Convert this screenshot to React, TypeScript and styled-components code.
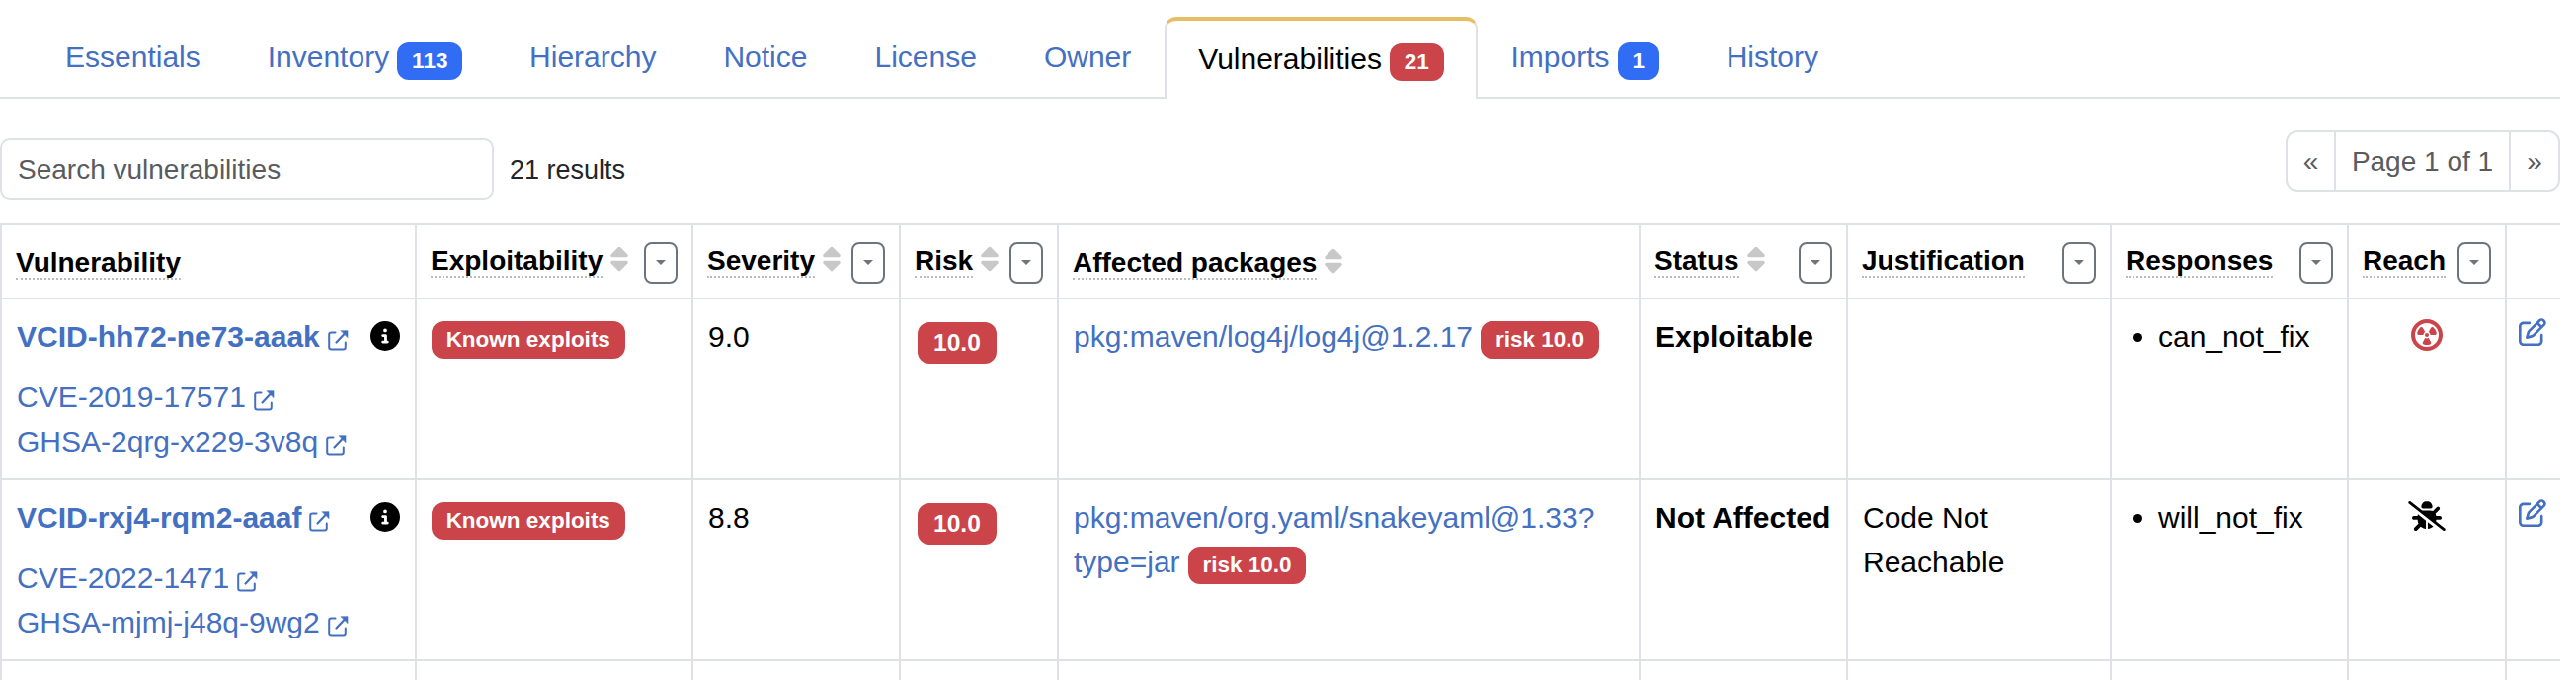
import React from 'react';
import styled, { createGlobalStyle } from 'styled-components';
import { FaBugSlash, FaCircleInfo, FaCircleRadiation, FaRegPenToSquare, FaSort } from 'react-icons/fa6';

const color = {
  line: '#dee2e6',
  link: '#4470c2',
  blue: '#316df4',
  red: '#cb444a',
  gold: '#e6be64',
  muted: '#595c5f',
  outline: '#6c757d',
};

const Global = createGlobalStyle`
  *, *::before, *::after { box-sizing: border-box; }
  body {
    margin: 0;
    background: #fff;
    color: #000;
    font-family: "Liberation Sans", Arial, sans-serif;
    font-size: 30px;
    line-height: 45px;
  }
`;

const Page = styled.main`
  width: 2592px;
  height: 688px;
  overflow: hidden;
`;

const TabBar = styled.nav`
  display: flex;
  height: 100px;
  padding: 17px 0 0 32px;
  border-bottom: 2px solid ${color.line};
`;

const Tab = styled.a<{ $active?: boolean }>`
  height: ${p => (p.$active ? 83 : 81)}px;
  padding: ${p => (p.$active ? 16 : 18)}px 32px 0;
  border: 2px solid ${p => (p.$active ? color.line : 'transparent')};
  border-top: ${p => (p.$active ? `4px solid ${color.gold}` : '0 solid transparent')};
  border-bottom: 0;
  border-radius: 12px 12px 0 0;
  background: ${p => (p.$active ? '#fff' : 'transparent')};
  color: ${p => (p.$active ? '#000' : color.link)};
  white-space: nowrap;
  text-decoration: none;
`;

const Badge = styled.span<{ $tone: 'blue' | 'red'; $large?: boolean }>`
  display: inline-block;
  padding: 0.35em 0.65em;
  border-radius: 12px;
  background: ${p => color[p.$tone]};
  color: #fff;
  font-size: ${p => (p.$large ? 24.6 : 22.5)}px;
  font-weight: 700;
  line-height: 1;
  white-space: nowrap;
  vertical-align: ${p => (p.$tone === 'blue' ? '-1px' : 'baseline')};
`;

const Toolbar = styled.div`
  display: flex;
  align-items: flex-start;
  justify-content: space-between;
  height: 126px;
  padding-top: 32px;
  font-size: 28px;
  line-height: 42px;
`;

const SearchGroup = styled.div`
  display: flex;
  align-items: center;
  gap: 16px;
  padding-top: 8px;
  color: #212529;
`;

const SearchInput = styled.input`
  width: 500px;
  height: 62px;
  padding: 2px 16px 0;
  border: 2px solid ${color.line};
  border-radius: 10px;
  background: #fff;
  font: inherit;
  &::placeholder { color: ${color.muted}; opacity: 1; }
`;

const ResultCount = styled.span`
  padding-top: 2px;
  font-size: 27px;
`;

const Pagination = styled.div`
  display: flex;
  width: 278px;
  height: 62px;
  border: 2px solid ${color.line};
  border-radius: 12px;
  color: ${color.muted};
`;

const PageItem = styled.span<{ $width: number }>`
  width: ${p => p.$width}px;
  padding-top: 9px;
  text-align: center;
  & + & { border-left: 2px solid ${color.line}; }
`;

const Table = styled.table`
  width: 2592px;
  table-layout: fixed;
  border-collapse: separate;
  border-spacing: 0;
  border-top: 2px solid ${color.line};
  border-right: 2px solid ${color.line};
`;

const HeadCell = styled.th`
  height: 75px;
  padding: 0 14px;
  border-left: 2px solid ${color.line};
  border-bottom: 2px solid ${color.line};
  font-size: 28px;
  line-height: 42px;
  text-align: left;
  vertical-align: top;
`;

const HeadContent = styled.div<{ $filter: boolean }>`
  display: flex;
  justify-content: space-between;
  padding-top: ${p => (p.$filter ? 17 : 19)}px;
`;

const HeadLabel = styled.span`
  display: flex;
  align-items: flex-start;
  gap: 8px;
`;

const Term = styled.span`
  height: 36px;
  line-height: 38px;
  border-bottom: 2px dotted #bbb;
`;

const SortIcon = styled(FaSort)`
  width: 18px;
  height: 28px;
  margin-top: 3px;
  color: #c8c8c8;
`;

const FilterButton = styled.button`
  display: flex;
  align-items: center;
  justify-content: center;
  width: 34px;
  height: 42px;
  padding: 0;
  border: 2px solid ${color.outline};
  border-radius: 8px;
  background: #fff;
  &::after {
    content: '';
    margin-top: -1px;
    border-top: 5px solid ${color.outline};
    border-left: 5px solid transparent;
    border-right: 5px solid transparent;
  }
`;

const Cell = styled.td`
  height: 183px;
  padding: 15px 14px 15px 15px;
  border-left: 2px solid ${color.line};
  border-bottom: 2px solid ${color.line};
  vertical-align: top;
`;

const EditCell = styled(Cell)`
  padding: 15px 0 0 12px;
`;

const Link = styled.a<{ $strong?: boolean }>`
  color: ${color.link};
  font-weight: ${p => (p.$strong ? 700 : 400)};
  text-decoration: none;
`;

const PrimaryId = styled.div`
  display: flex;
  justify-content: space-between;
  margin: 0 1px 16px 0;
`;

const InfoIcon = styled(FaCircleInfo)`
  width: 30px;
  height: 30px;
  margin-top: 7px;
`;

const AliasList = styled.ul`
  margin: 0;
  padding: 0;
  list-style: none;
`;

const ExternalSvg = styled.svg`
  width: 22px;
  height: 22px;
  margin-left: 7px;
  vertical-align: -4px;
`;

const RiskBadge = styled.div`
  display: flex;
  padding: 8px 0 0 2px;
`;

const ResponseList = styled.ul`
  margin: 0;
  padding: 0 0 0 32px;
`;

const ReachIcon = styled.span<{ $alert?: boolean }>`
  display: flex;
  justify-content: center;
  padding: ${p => (p.$alert ? 5 : 6)}px 2px 0 0;
  color: ${p => (p.$alert ? color.red : '#000')};
`;

const RadiationIcon = styled(FaCircleRadiation)`
  width: 32px;
  height: 32px;
`;

const BugSlashIcon = styled(FaBugSlash)`
  width: 38px;
  height: 30px;
`;

const EditIcon = styled(FaRegPenToSquare)`
  display: block;
  width: 28px;
  height: 28px;
  margin-top: 4px;
  color: ${color.link};
`;

const ExternalIcon = () => (
  <ExternalSvg viewBox="0 0 22 22" fill="none" stroke="currentColor" strokeWidth="2" strokeLinecap="round">
    <path d="M8.500 3.500H4.500Q2.200 3.500 2.200 5.800V18.200Q2.200 20.500 4.500 20.500H16.500Q18.800 20.500 18.800 18.200V13.500" />
    <path d="M9.500 13.500L18 4.500" strokeWidth="2.2" />
    <path d="M14.300 1.700H21V8.400Z" fill="currentColor" strokeWidth="0.6" strokeLinejoin="round" />
  </ExternalSvg>
);

const tabs: { label: string; count?: string; active?: boolean }[] = [
  { label: 'Essentials' },
  { label: 'Inventory', count: '113' },
  { label: 'Hierarchy' },
  { label: 'Notice' },
  { label: 'License' },
  { label: 'Owner' },
  { label: 'Vulnerabilities', count: '21', active: true },
  { label: 'Imports', count: '1' },
  { label: 'History' },
];

const columns: { label: string; width: number; sort?: boolean; filter?: boolean }[] = [
  { label: 'Vulnerability', width: 420 },
  { label: 'Exploitability', width: 280, sort: true, filter: true },
  { label: 'Severity', width: 210, sort: true, filter: true },
  { label: 'Risk', width: 160, sort: true, filter: true },
  { label: 'Affected packages', width: 589, sort: true },
  { label: 'Status', width: 210, sort: true, filter: true },
  { label: 'Justification', width: 267, filter: true },
  { label: 'Responses', width: 240, filter: true },
  { label: 'Reach', width: 160, filter: true },
  { label: '', width: 56 },
];

const rows = [
  {
    id: 'VCID-hh72-ne73-aaak',
    aliases: ['CVE-2019-17571', 'GHSA-2qrg-x229-3v8q'],
    severity: '9.0',
    pkg: 'pkg:maven/log4j/log4j@1.2.17',
    status: 'Exploitable',
    justification: '',
    response: 'can_not_fix',
    reachable: true,
  },
  {
    id: 'VCID-rxj4-rqm2-aaaf',
    aliases: ['CVE-2022-1471', 'GHSA-mjmj-j48q-9wg2'],
    severity: '8.8',
    pkg: 'pkg:maven/org.yaml/snakeyaml@1.33?type=jar',
    status: 'Not Affected',
    justification: 'Code Not Reachable',
    response: 'will_not_fix',
    reachable: false,
  },
];

export default function App() {
  return (
    <Page>
      <Global />
      <TabBar>
        {tabs.map(t => (
          <Tab key={t.label} $active={t.active}>
            {t.label}
            {t.count && <> <Badge $tone={t.active ? 'red' : 'blue'}>{t.count}</Badge></>}
          </Tab>
        ))}
      </TabBar>
      <Toolbar>
        <SearchGroup>
          <SearchInput placeholder="Search vulnerabilities" />
          <ResultCount>21 results</ResultCount>
        </SearchGroup>
        <Pagination>
          <PageItem $width={47}>«</PageItem>
          <PageItem $width={177}>Page 1 of 1</PageItem>
          <PageItem $width={50}>»</PageItem>
        </Pagination>
      </Toolbar>
      <Table>
        <colgroup>
          {columns.map(c => <col key={c.label} width={c.width} />)}
        </colgroup>
        <thead>
          <tr>
            {columns.map(c => (
              <HeadCell key={c.label}>
                {c.label && (
                  <HeadContent $filter={!!c.filter}>
                    <HeadLabel>
                      <Term>{c.label}</Term>
                      {c.sort && <SortIcon />}
                    </HeadLabel>
                    {c.filter && <FilterButton aria-label={`Filter ${c.label}`} />}
                  </HeadContent>
                )}
              </HeadCell>
            ))}
          </tr>
        </thead>
        <tbody>
          {rows.map(r => (
            <tr key={r.id}>
              <Cell>
                <PrimaryId>
                  <Link $strong>{r.id}<ExternalIcon /></Link>
                  <InfoIcon />
                </PrimaryId>
                <AliasList>
                  {r.aliases.map(a => <li key={a}><Link>{a}<ExternalIcon /></Link></li>)}
                </AliasList>
              </Cell>
              <Cell><Badge $tone="red">Known exploits</Badge></Cell>
              <Cell>{r.severity}</Cell>
              <Cell><RiskBadge><Badge $tone="red" $large>10.0</Badge></RiskBadge></Cell>
              <Cell><Link>{r.pkg}</Link> <Badge $tone="red">risk 10.0</Badge></Cell>
              <Cell><strong>{r.status}</strong></Cell>
              <Cell>{r.justification}</Cell>
              <Cell><ResponseList><li>{r.response}</li></ResponseList></Cell>
              <Cell>
                <ReachIcon $alert={r.reachable}>
                  {r.reachable ? <RadiationIcon /> : <BugSlashIcon />}
                </ReachIcon>
              </Cell>
              <EditCell><EditIcon /></EditCell>
            </tr>
          ))}
          <tr>{columns.map(c => <Cell key={c.label} />)}</tr>
        </tbody>
      </Table>
    </Page>
  );
}
